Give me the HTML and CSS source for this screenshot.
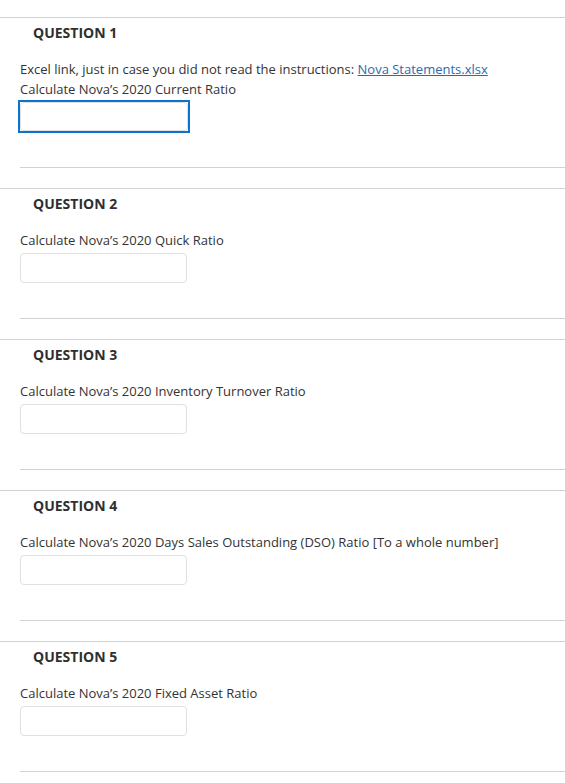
FILE: index.html
```html
<!DOCTYPE html>
<html>
<head>
<meta charset="utf-8">
<link rel="stylesheet" href="styles.css">
</head>
<body>
<div class="page">
  <section class="question">
    <h2 class="q-title">QUESTION 1</h2>
    <div class="q-body">
      <p class="q-text">Excel link, just in case you did not read the instructions: <a href="#" class="q-link">Nova Statements.xlsx</a></p>
      <p class="q-text">Calculate Nova’s 2020 Current Ratio</p>
      <div class="focus-ring"><input type="text" class="answer"></div>
    </div>
  </section>
  <section class="question">
    <h2 class="q-title">QUESTION 2</h2>
    <div class="q-body">
      <p class="q-text">Calculate Nova’s 2020 Quick Ratio</p>
      <input type="text" class="answer">
    </div>
  </section>
  <section class="question">
    <h2 class="q-title">QUESTION 3</h2>
    <div class="q-body">
      <p class="q-text">Calculate Nova’s 2020 Inventory Turnover Ratio</p>
      <input type="text" class="answer">
    </div>
  </section>
  <section class="question">
    <h2 class="q-title">QUESTION 4</h2>
    <div class="q-body">
      <p class="q-text">Calculate Nova’s 2020 Days Sales Outstanding (DSO) Ratio [To a whole number]</p>
      <input type="text" class="answer">
    </div>
  </section>
  <section class="question">
    <h2 class="q-title">QUESTION 5</h2>
    <div class="q-body">
      <p class="q-text">Calculate Nova’s 2020 Fixed Asset Ratio</p>
      <input type="text" class="answer">
    </div>
  </section>
</div>
</body>
</html>
```

FILE: styles.css
```css
html, body {
  margin: 0;
  padding: 0;
  background: #ffffff;
}
.page {
  padding-top: 17px;
  font-family: "Open Sans", "Liberation Sans", sans-serif;
  color: #333333;
}
.question {
  border-top: 1px solid #d2d2d2;
  margin-bottom: 20px;
}
.q-title {
  margin: 0;
  padding: 5px 0 0 33px;
  font-size: 14px;
  line-height: 20px;
  font-weight: 700;
  color: #2f2f2f;
}
.q-body {
  margin: 16px 0 0 20px;
  padding-bottom: 35px;
  border-bottom: 1px solid #d2d2d2;
}
.q-text {
  margin: 0;
  font-size: 13px;
  line-height: 20px;
}
.q-link {
  color: #2a6ab0;
  text-decoration: underline;
}
.answer {
  display: block;
  box-sizing: border-box;
  width: 167px;
  height: 30px;
  margin: 3px 0 0 0;
  padding: 0;
  border: 1px solid #e0e0e0;
  border-radius: 4px;
  background: #ffffff;
  outline: none;
}
.focus-ring {
  display: block;
  width: 168px;
  margin: 1px 0 -1px -2px;
  border: 2px solid #0b72d0;
  padding: 0;
}
.focus-ring .answer {
  margin: 0;
  width: 168px;
  height: 29px;
}
```
